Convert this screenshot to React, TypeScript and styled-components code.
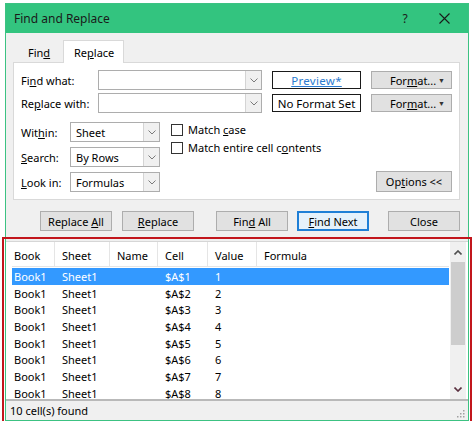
import React from "react";
import styled, { createGlobalStyle, css } from "styled-components";

const GlobalStyle = createGlobalStyle`
    html, body {
        margin: 0;
        padding: 0;
        background: #ffffff;
    }
    body {
        font-family: "Noto Sans", "Open Sans", Arial, sans-serif;
        font-size: 11px;
        color: #000000;
    }
    u {
        text-decoration-thickness: 1px;
        text-underline-offset: 1px;
    }
`;

const Dialog = styled.div`
    margin: 3px 0 0 5px;
    width: 462px;
    border: 1px solid #3cc282;
    background: #f0f0f0;
    display: flex;
    flex-direction: column;
`;

const TitleBar = styled.div`
    height: 29px;
    background: #33c47f;
    display: flex;
    align-items: center;
    padding-left: 8px;
    font-size: 12px;
    color: #1a1a1a;
`;

const TitleText = styled.div`
    flex: 1;
`;

const TitleButton = styled.div<{ $w: number }>`
    width: ${(p) => p.$w}px;
    display: flex;
    align-items: center;
    justify-content: center;
    font-size: 12px;
    color: #1a1a1a;
`;

const TabStrip = styled.div`
    height: 29px;
    display: flex;
    align-items: flex-end;
    padding-left: 11px;
`;

const Tab = styled.div<{ $active?: boolean }>`
    height: 20px;
    display: flex;
    align-items: center;
    box-sizing: border-box;
    ${(p) =>
        p.$active
            ? css`
                  height: 23px;
                  width: 61px;
                  padding-left: 10px;
                  background: #ffffff;
                  border: 1px solid #d9d9d9;
                  border-bottom: none;
                  margin-bottom: -1px;
                  position: relative;
                  z-index: 1;
              `
            : css`
                  width: 46px;
                  padding-left: 11px;
              `}
`;

const Panel = styled.div`
    margin: 0 8px 0 7px;
    background: #ffffff;
    border: 1px solid #d9d9d9;
    padding: 7px;
    display: flex;
    flex-direction: column;
`;

const FormRow = styled.div<{ $mt?: number }>`
    display: flex;
    align-items: center;
    height: 20px;
    margin-top: ${(p) => p.$mt ?? 0}px;
`;

const Label = styled.div<{ $w: number }>`
    width: ${(p) => p.$w}px;
    white-space: nowrap;
`;

const Combo = styled.div<{ $w: number }>`
    width: ${(p) => p.$w}px;
    height: 20px;
    box-sizing: border-box;
    border: 1px solid #adadad;
    background: #ffffff;
    display: flex;
    align-items: stretch;
`;

const ComboText = styled.div`
    flex: 1;
    display: flex;
    align-items: center;
    padding-left: 5px;
`;

const ComboButton = styled.div`
    width: 15px;
    border-left: 1px solid #d4d4d4;
    background: #f0f0f0;
    display: flex;
    align-items: center;
    justify-content: center;
`;

const PreviewBox = styled.div<{ $link?: boolean }>`
    margin-left: 10px;
    width: 89px;
    height: 18px;
    box-sizing: border-box;
    border: 1px solid #1a1a1a;
    display: flex;
    align-items: center;
    justify-content: center;
    font-size: 11.5px;
    ${(p) =>
        p.$link &&
        css`
            color: #2b7bd0;
            text-decoration: underline;
            letter-spacing: 0.3px;
        `}
`;

const Button = styled.div<{ $w: number; $ml?: number; $focused?: boolean }>`
    width: ${(p) => p.$w}px;
    height: 20px;
    margin-left: ${(p) => p.$ml ?? 0}px;
    box-sizing: border-box;
    background: #e1e1e1;
    border: 1px solid #adadad;
    display: flex;
    align-items: center;
    justify-content: center;
    white-space: nowrap;
    ${(p) =>
        p.$focused &&
        css`
            border: 2px solid #1f7fd6;
            background: #e5f1fb;
        `}
`;

const FormatButton = styled(Button)`
    height: 18px;
    margin-left: 10px;
    justify-content: flex-start;
    padding-left: 18px;
`;

const Caret = styled.span`
    margin-left: auto;
    margin-right: 6px;
    font-size: 7px;
    color: #333;
`;

const LowerArea = styled.div`
    display: flex;
    margin-top: 9px;
`;

const SelectColumn = styled.div`
    display: flex;
    flex-direction: column;
    gap: 5px;
`;

const CheckColumn = styled.div`
    display: flex;
    flex-direction: column;
    gap: 5px;
    margin-left: 11px;
    padding-top: 1px;
`;

const CheckRow = styled.div`
    display: flex;
    align-items: center;
    height: 13px;
    gap: 5px;
`;

const Box = styled.div`
    width: 12px;
    height: 12px;
    box-sizing: border-box;
    border: 1px solid #333333;
    background: #ffffff;
`;

const OptionsButton = styled(Button)`
    margin-left: auto;
    align-self: flex-end;
    height: 21px;
`;

const ButtonRow = styled.div`
    display: flex;
    padding-left: 34px;
    margin-top: 11px;
`;

const Results = styled.div`
    position: relative;
    margin-top: 10px;
    display: flex;
    flex-direction: column;
`;

const Annotation = styled.div`
    position: absolute;
    left: -4px;
    right: -4px;
    top: -4px;
    bottom: -4px;
    border: 2px solid #c2161c;
    pointer-events: none;
`;

const List = styled.div`
    height: 157px;
    background: #ffffff;
    border-top: 1px solid #d6d6d6;
    display: flex;
    overflow: hidden;
`;

const ListBody = styled.div`
    flex: 1;
    padding-left: 6px;
    padding-right: 1px;
    overflow: hidden;
`;

const HeaderRow = styled.div`
    display: flex;
    height: 24px;
    border-bottom: 1px solid #e5e5e5;
`;

const HeaderCell = styled.div<{ $w?: number; $first?: boolean }>`
    ${(p) => (p.$w ? `width: ${p.$w}px;` : "flex: 1;")}
    box-sizing: border-box;
    padding-left: ${(p) => (p.$first ? 2 : 7)}px;
    border-right: ${(p) => (p.$w ? "1px solid #e5e5e5" : "none")};
    display: flex;
    align-items: center;
    padding-top: 2px;
`;

const DataRow = styled.div<{ $selected?: boolean }>`
    display: flex;
    height: 16.7px;
    align-items: center;
    ${(p) =>
        p.$selected &&
        css`
            background: #3399ff;
            color: #ffffff;
            margin-top: 1px;
        `}
`;

const DataCell = styled.div<{ $w?: number; $first?: boolean }>`
    ${(p) => (p.$w ? `width: ${p.$w}px;` : "flex: 1;")}
    box-sizing: border-box;
    padding-left: ${(p) => (p.$first ? 2 : 7)}px;
    white-space: nowrap;
`;

const ScrollBar = styled.div`
    width: 16px;
    margin-right: 2px;
    background: #f0f0f0;
    display: flex;
    flex-direction: column;
`;

const ScrollArrow = styled.div`
    height: 20px;
    display: flex;
    align-items: center;
    justify-content: center;
`;

const ScrollThumb = styled.div`
    height: 83px;
    margin: 0 1px;
    background: #cdcdcd;
`;

const ScrollTrack = styled.div`
    flex: 1;
`;

const StatusBar = styled.div`
    height: 19px;
    border-top: 2px solid #b9b9b9;
    background: #f0f0f0;
    display: flex;
    align-items: center;
    padding-left: 4px;
    position: relative;
`;

const Grip = styled.svg`
    position: absolute;
    right: 3px;
    bottom: 2px;
`;

const Chevron = ({ up = false, color = "#7a7a7a" }: { up?: boolean; color?: string }) => (
    <svg width="8" height="5" viewBox="0 0 8 5">
        <path
            d={up ? "M0.5 4.5 L4 1 L7.5 4.5" : "M0.5 0.5 L4 4 L7.5 0.5"}
            fill="none"
            stroke={color}
            strokeWidth={up || color !== "#7a7a7a" ? 1.6 : 1}
        />
    </svg>
);

const columns = [
    { key: "book", title: "Book", w: 43 },
    { key: "sheet", title: "Sheet", w: 55 },
    { key: "name", title: "Name", w: 48 },
    { key: "cell", title: "Cell", w: 50 },
    { key: "value", title: "Value", w: 49 },
    { key: "formula", title: "Formula" },
];

// only the rows that fit in the visible part of the list
const rows = Array.from({ length: 8 }, (_, i) => ({
    book: "Book1",
    sheet: "Sheet1",
    name: "",
    cell: `$A$${i + 1}`,
    value: String(i + 1),
    formula: "",
}));

const App = () => {
    return (
        <>
            <GlobalStyle />
            <Dialog>
                <TitleBar>
                    <TitleText>Find and Replace</TitleText>
                    <TitleButton $w={30}>?</TitleButton>
                    <TitleButton $w={48}>
                        <svg width="11" height="11" viewBox="0 0 11 11">
                            <path d="M0.5 0.5 L10.5 10.5 M10.5 0.5 L0.5 10.5" stroke="#1a1a1a" strokeWidth="1.1" />
                        </svg>
                    </TitleButton>
                </TitleBar>

                <TabStrip>
                    <Tab>
                        <span>Fin<u>d</u></span>
                    </Tab>
                    <Tab $active>
                        <span>Re<u>p</u>lace</span>
                    </Tab>
                </TabStrip>

                <Panel>
                    <FormRow>
                        <Label $w={77}>
                            Fi<u>n</u>d what:
                        </Label>
                        <Combo $w={164}>
                            <ComboText />
                            <ComboButton>
                                <Chevron />
                            </ComboButton>
                        </Combo>
                        <PreviewBox $link>Preview*</PreviewBox>
                        <FormatButton $w={81}>
                            <span>For<u>m</u>at...</span>
                            <Caret>▼</Caret>
                        </FormatButton>
                    </FormRow>
                    <FormRow $mt={3}>
                        <Label $w={77}>
                            Re<u>p</u>lace with:
                        </Label>
                        <Combo $w={164}>
                            <ComboText />
                            <ComboButton>
                                <Chevron />
                            </ComboButton>
                        </Combo>
                        <PreviewBox>No Format Set</PreviewBox>
                        <FormatButton $w={81}>
                            <span>For<u>m</u>at...</span>
                            <Caret>▼</Caret>
                        </FormatButton>
                    </FormRow>

                    <LowerArea>
                        <SelectColumn>
                            <FormRow>
                                <Label $w={49}>
                                    Wit<u>h</u>in:
                                </Label>
                                <Combo $w={90}>
                                    <ComboText>Sheet</ComboText>
                                    <ComboButton>
                                        <Chevron />
                                    </ComboButton>
                                </Combo>
                            </FormRow>
                            <FormRow>
                                <Label $w={49}>
                                    <u>S</u>earch:
                                </Label>
                                <Combo $w={90}>
                                    <ComboText>By Rows</ComboText>
                                    <ComboButton>
                                        <Chevron />
                                    </ComboButton>
                                </Combo>
                            </FormRow>
                            <FormRow>
                                <Label $w={49}>
                                    <u>L</u>ook in:
                                </Label>
                                <Combo $w={90}>
                                    <ComboText>Formulas</ComboText>
                                    <ComboButton>
                                        <Chevron />
                                    </ComboButton>
                                </Combo>
                            </FormRow>
                        </SelectColumn>
                        <CheckColumn>
                            <CheckRow>
                                <Box />
                                <span>
                                    Match <u>c</u>ase
                                </span>
                            </CheckRow>
                            <CheckRow>
                                <Box />
                                <span>
                                    Match entire cell c<u>o</u>ntents
                                </span>
                            </CheckRow>
                        </CheckColumn>
                        <OptionsButton $w={76}>
                            <span>Op<u>t</u>ions &lt;&lt;</span>
                        </OptionsButton>
                    </LowerArea>
                </Panel>

                <ButtonRow>
                    <Button $w={72}>
                        <span>Replace <u>A</u>ll</span>
                    </Button>
                    <Button $w={72} $ml={10}>
                        <span><u>R</u>eplace</span>
                    </Button>
                    <Button $w={72} $ml={22}>
                        <span>Fin<u>d</u> All</span>
                    </Button>
                    <Button $w={72} $ml={9} $focused>
                        <span><u>F</u>ind Next</span>
                    </Button>
                    <Button $w={72} $ml={19}>
                        <span>Close</span>
                    </Button>
                </ButtonRow>

                <Results>
                    <List>
                        <ListBody>
                            <HeaderRow>
                                {columns.map((c, i) => (
                                    <HeaderCell key={c.key} $w={c.w} $first={i === 0}>
                                        {c.title}
                                    </HeaderCell>
                                ))}
                            </HeaderRow>
                            {rows.map((r, ri) => (
                                <DataRow key={ri} $selected={ri === 0}>
                                    {columns.map((c, i) => (
                                        <DataCell key={c.key} $w={c.w} $first={i === 0}>
                                            {r[c.key as keyof typeof r]}
                                        </DataCell>
                                    ))}
                                </DataRow>
                            ))}
                        </ListBody>
                        <ScrollBar>
                            <ScrollArrow>
                                <Chevron up color="#505050" />
                            </ScrollArrow>
                            <ScrollThumb />
                            <ScrollTrack />
                            <ScrollArrow>
                                <Chevron color="#5a3040" />
                            </ScrollArrow>
                        </ScrollBar>
                    </List>
                    <StatusBar>
                        <span>10 cell(s) found</span>
                        <Grip width="8" height="8" viewBox="0 0 8 8">
                            <rect x="6" y="0" width="1.5" height="1.5" fill="#a0a0a0" />
                            <rect x="3" y="3" width="1.5" height="1.5" fill="#a0a0a0" />
                            <rect x="6" y="3" width="1.5" height="1.5" fill="#a0a0a0" />
                            <rect x="0" y="6" width="1.5" height="1.5" fill="#a0a0a0" />
                            <rect x="3" y="6" width="1.5" height="1.5" fill="#a0a0a0" />
                            <rect x="6" y="6" width="1.5" height="1.5" fill="#a0a0a0" />
                        </Grip>
                    </StatusBar>
                    <Annotation />
                </Results>
            </Dialog>
        </>
    );
};

export default App;
